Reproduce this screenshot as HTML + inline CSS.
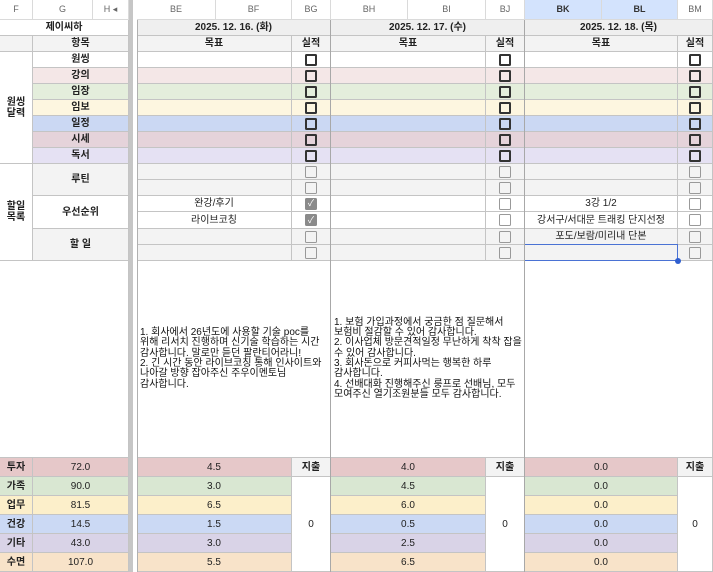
<!DOCTYPE html>
<html><head><meta charset="utf-8"><style>
*{margin:0;padding:0}
body{width:713px;height:572px;overflow:hidden;background:#fff;position:relative;font-family:"Liberation Sans","Noto Sans CJK KR",sans-serif;color:#222}
.c{position:absolute;box-sizing:border-box;border-right:1px solid #c4c4c4;border-bottom:1px solid #c4c4c4;font-size:10px;display:flex;align-items:center;justify-content:center;text-align:center;line-height:11px}
.h{color:#666;font-size:9px;background:#fff;border-color:#dadada}
.b{font-weight:bold}
.g{background:#f3f3f3}
.cb{width:12px;height:12px;border:2px solid #333;border-radius:1.5px;box-sizing:border-box}
.cl{border:1.5px solid #999}
.ck{background:#8a8a8a;border-color:#8a8a8a;color:#fff;font-size:9px;line-height:9px;display:flex;align-items:center;justify-content:center}
.t{justify-content:flex-start;text-align:left;padding-left:3px;font-size:10px;line-height:10.3px;color:#111;white-space:nowrap}
</style></head><body>
<div class="c h" style="left:0;top:0;width:33px;height:20px">F</div>
<div class="c h" style="left:33px;top:0;width:60px;height:20px">G</div>
<div class="c h" style="left:93px;top:0;width:36px;height:20px">H&nbsp;◂</div>
<div class="c h" style="left:137px;top:0;width:79px;height:20px">BE</div>
<div class="c h" style="left:216px;top:0;width:76px;height:20px">BF</div>
<div class="c h" style="left:292px;top:0;width:39px;height:20px">BG</div>
<div class="c h" style="left:331px;top:0;width:77px;height:20px">BH</div>
<div class="c h" style="left:408px;top:0;width:78px;height:20px">BI</div>
<div class="c h" style="left:486px;top:0;width:39px;height:20px">BJ</div>
<div class="c h b" style="left:525px;top:0;width:77px;height:20px;background:#d3e3fd;color:#333">BK</div>
<div class="c h b" style="left:602px;top:0;width:76px;height:20px;background:#d3e3fd;color:#333">BL</div>
<div class="c h" style="left:678px;top:0;width:35px;height:20px">BM</div>
<div style="position:absolute;left:129px;top:0;width:4px;height:572px;background:#c6c6c6"></div>
<div class="c b" style="left:0;top:20px;width:129px;height:16px">제이씨하</div>
<div class="c b g" style="left:137px;top:20px;width:194px;height:16px;background:#efefef">2025. 12. 16. (화)</div>
<div class="c b g" style="left:331px;top:20px;width:194px;height:16px;background:#efefef">2025. 12. 17. (수)</div>
<div class="c b g" style="left:525px;top:20px;width:188px;height:16px;background:#efefef">2025. 12. 18. (목)</div>
<div class="c g" style="left:0;top:36px;width:33px;height:16px"></div>
<div class="c b g" style="left:33px;top:36px;width:96px;height:16px">항목</div>
<div class="c b g" style="left:137px;top:36px;width:155px;height:16px">목표</div>
<div class="c b g" style="left:292px;top:36px;width:39px;height:16px">실적</div>
<div class="c b g" style="left:331px;top:36px;width:155px;height:16px">목표</div>
<div class="c b g" style="left:486px;top:36px;width:39px;height:16px">실적</div>
<div class="c b g" style="left:525px;top:36px;width:153px;height:16px">목표</div>
<div class="c b g" style="left:678px;top:36px;width:35px;height:16px">실적</div>
<div class="c b" style="left:0;top:52px;width:33px;height:112px">원씽<br>달력</div>
<div class="c b" style="left:33px;top:52px;width:96px;height:16px;background:#fff">원씽</div>
<div class="c b" style="left:33px;top:68px;width:96px;height:16px;background:#f4e7e7">강의</div>
<div class="c b" style="left:33px;top:84px;width:96px;height:16px;background:#e4eedc">임장</div>
<div class="c b" style="left:33px;top:100px;width:96px;height:16px;background:#fdf6e0">임보</div>
<div class="c b" style="left:33px;top:116px;width:96px;height:16px;background:#cbd8f3">일정</div>
<div class="c b" style="left:33px;top:132px;width:96px;height:16px;background:#e5d3da">시세</div>
<div class="c b" style="left:33px;top:148px;width:96px;height:16px;background:#e5e1f3">독서</div>
<div style="position:absolute;left:137px;top:52px;width:576px;height:112px">
<div style="position:absolute;left:0;top:0;width:576px;height:16px;background:#fff"></div>
<div style="position:absolute;left:0;top:16px;width:576px;height:16px;background:#f4e7e7"></div>
<div style="position:absolute;left:0;top:32px;width:576px;height:16px;background:#e4eedc"></div>
<div style="position:absolute;left:0;top:48px;width:576px;height:16px;background:#fdf6e0"></div>
<div style="position:absolute;left:0;top:64px;width:576px;height:16px;background:#cbd8f3"></div>
<div style="position:absolute;left:0;top:80px;width:576px;height:16px;background:#e5d3da"></div>
<div style="position:absolute;left:0;top:96px;width:576px;height:16px;background:#e5e1f3"></div>
</div>
<div class="c" style="left:137px;top:52px;width:155px;height:16px"></div><div class="c" style="left:292px;top:52px;width:39px;height:16px"><div class="cb"></div></div><div class="c" style="left:331px;top:52px;width:155px;height:16px"></div><div class="c" style="left:486px;top:52px;width:39px;height:16px"><div class="cb"></div></div><div class="c" style="left:525px;top:52px;width:153px;height:16px"></div><div class="c" style="left:678px;top:52px;width:35px;height:16px"><div class="cb"></div></div>
<div class="c" style="left:137px;top:68px;width:155px;height:16px"></div><div class="c" style="left:292px;top:68px;width:39px;height:16px"><div class="cb"></div></div><div class="c" style="left:331px;top:68px;width:155px;height:16px"></div><div class="c" style="left:486px;top:68px;width:39px;height:16px"><div class="cb"></div></div><div class="c" style="left:525px;top:68px;width:153px;height:16px"></div><div class="c" style="left:678px;top:68px;width:35px;height:16px"><div class="cb"></div></div>
<div class="c" style="left:137px;top:84px;width:155px;height:16px"></div><div class="c" style="left:292px;top:84px;width:39px;height:16px"><div class="cb"></div></div><div class="c" style="left:331px;top:84px;width:155px;height:16px"></div><div class="c" style="left:486px;top:84px;width:39px;height:16px"><div class="cb"></div></div><div class="c" style="left:525px;top:84px;width:153px;height:16px"></div><div class="c" style="left:678px;top:84px;width:35px;height:16px"><div class="cb"></div></div>
<div class="c" style="left:137px;top:100px;width:155px;height:16px"></div><div class="c" style="left:292px;top:100px;width:39px;height:16px"><div class="cb"></div></div><div class="c" style="left:331px;top:100px;width:155px;height:16px"></div><div class="c" style="left:486px;top:100px;width:39px;height:16px"><div class="cb"></div></div><div class="c" style="left:525px;top:100px;width:153px;height:16px"></div><div class="c" style="left:678px;top:100px;width:35px;height:16px"><div class="cb"></div></div>
<div class="c" style="left:137px;top:116px;width:155px;height:16px"></div><div class="c" style="left:292px;top:116px;width:39px;height:16px"><div class="cb"></div></div><div class="c" style="left:331px;top:116px;width:155px;height:16px"></div><div class="c" style="left:486px;top:116px;width:39px;height:16px"><div class="cb"></div></div><div class="c" style="left:525px;top:116px;width:153px;height:16px"></div><div class="c" style="left:678px;top:116px;width:35px;height:16px"><div class="cb"></div></div>
<div class="c" style="left:137px;top:132px;width:155px;height:16px"></div><div class="c" style="left:292px;top:132px;width:39px;height:16px"><div class="cb"></div></div><div class="c" style="left:331px;top:132px;width:155px;height:16px"></div><div class="c" style="left:486px;top:132px;width:39px;height:16px"><div class="cb"></div></div><div class="c" style="left:525px;top:132px;width:153px;height:16px"></div><div class="c" style="left:678px;top:132px;width:35px;height:16px"><div class="cb"></div></div>
<div class="c" style="left:137px;top:148px;width:155px;height:16px"></div><div class="c" style="left:292px;top:148px;width:39px;height:16px"><div class="cb"></div></div><div class="c" style="left:331px;top:148px;width:155px;height:16px"></div><div class="c" style="left:486px;top:148px;width:39px;height:16px"><div class="cb"></div></div><div class="c" style="left:525px;top:148px;width:153px;height:16px"></div><div class="c" style="left:678px;top:148px;width:35px;height:16px"><div class="cb"></div></div>
<div class="c b" style="left:0;top:164px;width:33px;height:97px">할일<br>목록</div>
<div class="c b g" style="left:33px;top:164px;width:96px;height:32px">루틴</div>
<div class="c b" style="left:33px;top:196px;width:96px;height:33px">우선순위</div>
<div class="c b g" style="left:33px;top:229px;width:96px;height:32px">할 일</div>
<div class="c g" style="left:137px;top:164px;width:155px;height:16px"></div><div class="c g" style="left:292px;top:164px;width:39px;height:16px"><div class="cb cl"></div></div><div class="c g" style="left:331px;top:164px;width:155px;height:16px"></div><div class="c g" style="left:486px;top:164px;width:39px;height:16px"><div class="cb cl"></div></div><div class="c g" style="left:525px;top:164px;width:153px;height:16px"></div><div class="c g" style="left:678px;top:164px;width:35px;height:16px"><div class="cb cl"></div></div>
<div class="c g" style="left:137px;top:180px;width:155px;height:16px"></div><div class="c g" style="left:292px;top:180px;width:39px;height:16px"><div class="cb cl"></div></div><div class="c g" style="left:331px;top:180px;width:155px;height:16px"></div><div class="c g" style="left:486px;top:180px;width:39px;height:16px"><div class="cb cl"></div></div><div class="c g" style="left:525px;top:180px;width:153px;height:16px"></div><div class="c g" style="left:678px;top:180px;width:35px;height:16px"><div class="cb cl"></div></div>
<div class="c" style="left:137px;top:196px;width:155px;height:16px">완강/후기</div><div class="c" style="left:292px;top:196px;width:39px;height:16px"><div class="cb ck">✓</div></div><div class="c" style="left:331px;top:196px;width:155px;height:16px"></div><div class="c" style="left:486px;top:196px;width:39px;height:16px"><div class="cb cl"></div></div><div class="c" style="left:525px;top:196px;width:153px;height:16px">3강 1/2</div><div class="c" style="left:678px;top:196px;width:35px;height:16px"><div class="cb cl"></div></div>
<div class="c" style="left:137px;top:212px;width:155px;height:17px">라이브코칭</div><div class="c" style="left:292px;top:212px;width:39px;height:17px"><div class="cb ck">✓</div></div><div class="c" style="left:331px;top:212px;width:155px;height:17px"></div><div class="c" style="left:486px;top:212px;width:39px;height:17px"><div class="cb cl"></div></div><div class="c" style="left:525px;top:212px;width:153px;height:17px">강서구/서대문 트래킹 단지선정</div><div class="c" style="left:678px;top:212px;width:35px;height:17px"><div class="cb cl"></div></div>
<div class="c g" style="left:137px;top:229px;width:155px;height:16px"></div><div class="c g" style="left:292px;top:229px;width:39px;height:16px"><div class="cb cl"></div></div><div class="c g" style="left:331px;top:229px;width:155px;height:16px"></div><div class="c g" style="left:486px;top:229px;width:39px;height:16px"><div class="cb cl"></div></div><div class="c g" style="left:525px;top:229px;width:153px;height:16px">포도/보람/미리내 단본</div><div class="c g" style="left:678px;top:229px;width:35px;height:16px"><div class="cb cl"></div></div>
<div class="c g" style="left:137px;top:245px;width:155px;height:16px"></div><div class="c g" style="left:292px;top:245px;width:39px;height:16px"><div class="cb cl"></div></div><div class="c g" style="left:331px;top:245px;width:155px;height:16px"></div><div class="c g" style="left:486px;top:245px;width:39px;height:16px"><div class="cb cl"></div></div><div class="c g" style="left:525px;top:245px;width:153px;height:16px"></div><div class="c g" style="left:678px;top:245px;width:35px;height:16px"><div class="cb cl"></div></div>
<div style="position:absolute;left:524px;top:244px;width:154px;height:17px;border:1.5px solid #4a72d4;box-sizing:border-box"></div>
<div style="position:absolute;left:675px;top:258px;width:6px;height:6px;border-radius:3px;background:#2f5fd0"></div>
<div class="c" style="left:0;top:261px;width:129px;height:197px"></div>
<div class="c t" style="left:137px;top:261px;width:194px;height:197px"><div>1. 회사에서 26년도에 사용할 기술 poc를<br>위해 리서치 진행하며 신기술 학습하는 시간<br>감사합니다. 말로만 듣던 팔란티어라니!<br>2. 긴 시간 동안 라이브코칭 통해 인사이트와<br>나아갈 방향 잡아주신 주우이멘토님<br>감사합니다.</div></div>
<div class="c t" style="left:331px;top:261px;width:194px;height:197px"><div>1. 보험 가입과정에서 궁금한 점 질문해서<br>보험비 절감할 수 있어 감사합니다.<br>2. 이사업체 방문견적일정 무난하게 착착 잡을<br>수 있어 감사합니다.<br>3. 회사돈으로 커피사먹는 행복한 하루<br>감사합니다.<br>4. 선배대화 진행해주신 룽프로 선배님, 모두<br>모여주신 열기조원분들 모두 감사합니다.</div></div>
<div class="c" style="left:525px;top:261px;width:188px;height:197px"></div>
<div class="c b" style="left:0;top:458px;width:33px;height:19px;background:#e6c8c9">투자</div><div class="c" style="left:33px;top:458px;width:96px;height:19px;background:#e6c8c9">72.0</div>
<div class="c b" style="left:0;top:477px;width:33px;height:19px;background:#d9e7d2">가족</div><div class="c" style="left:33px;top:477px;width:96px;height:19px;background:#d9e7d2">90.0</div>
<div class="c b" style="left:0;top:496px;width:33px;height:19px;background:#fcefca">업무</div><div class="c" style="left:33px;top:496px;width:96px;height:19px;background:#fcefca">81.5</div>
<div class="c b" style="left:0;top:515px;width:33px;height:19px;background:#cbd9f4">건강</div><div class="c" style="left:33px;top:515px;width:96px;height:19px;background:#cbd9f4">14.5</div>
<div class="c b" style="left:0;top:534px;width:33px;height:19px;background:#d9d3e7">기타</div><div class="c" style="left:33px;top:534px;width:96px;height:19px;background:#d9d3e7">43.0</div>
<div class="c b" style="left:0;top:553px;width:33px;height:19px;background:#f8e3c9">수면</div><div class="c" style="left:33px;top:553px;width:96px;height:19px;background:#f8e3c9">107.0</div>
<div class="c" style="left:137px;top:458px;width:155px;height:19px;background:#e6c8c9">4.5</div>
<div class="c" style="left:137px;top:477px;width:155px;height:19px;background:#d9e7d2">3.0</div>
<div class="c" style="left:137px;top:496px;width:155px;height:19px;background:#fcefca">6.5</div>
<div class="c" style="left:137px;top:515px;width:155px;height:19px;background:#cbd9f4">1.5</div>
<div class="c" style="left:137px;top:534px;width:155px;height:19px;background:#d9d3e7">3.0</div>
<div class="c" style="left:137px;top:553px;width:155px;height:19px;background:#f8e3c9">5.5</div>
<div class="c b g" style="left:292px;top:458px;width:39px;height:19px">지출</div>
<div class="c" style="left:292px;top:477px;width:39px;height:95px">0</div>
<div class="c" style="left:331px;top:458px;width:155px;height:19px;background:#e6c8c9">4.0</div>
<div class="c" style="left:331px;top:477px;width:155px;height:19px;background:#d9e7d2">4.5</div>
<div class="c" style="left:331px;top:496px;width:155px;height:19px;background:#fcefca">6.0</div>
<div class="c" style="left:331px;top:515px;width:155px;height:19px;background:#cbd9f4">0.5</div>
<div class="c" style="left:331px;top:534px;width:155px;height:19px;background:#d9d3e7">2.5</div>
<div class="c" style="left:331px;top:553px;width:155px;height:19px;background:#f8e3c9">6.5</div>
<div class="c b g" style="left:486px;top:458px;width:39px;height:19px">지출</div>
<div class="c" style="left:486px;top:477px;width:39px;height:95px">0</div>
<div class="c" style="left:525px;top:458px;width:153px;height:19px;background:#e6c8c9">0.0</div>
<div class="c" style="left:525px;top:477px;width:153px;height:19px;background:#d9e7d2">0.0</div>
<div class="c" style="left:525px;top:496px;width:153px;height:19px;background:#fcefca">0.0</div>
<div class="c" style="left:525px;top:515px;width:153px;height:19px;background:#cbd9f4">0.0</div>
<div class="c" style="left:525px;top:534px;width:153px;height:19px;background:#d9d3e7">0.0</div>
<div class="c" style="left:525px;top:553px;width:153px;height:19px;background:#f8e3c9">0.0</div>
<div class="c b g" style="left:678px;top:458px;width:35px;height:19px">지출</div>
<div class="c" style="left:678px;top:477px;width:35px;height:95px">0</div>
<div style="position:absolute;left:137px;top:20px;width:1px;height:552px;background:#b0b0b0"></div>
<div style="position:absolute;left:330px;top:20px;width:1px;height:552px;background:#a8a8a8"></div>
<div style="position:absolute;left:524px;top:20px;width:1px;height:552px;background:#a8a8a8"></div>
</body></html>
